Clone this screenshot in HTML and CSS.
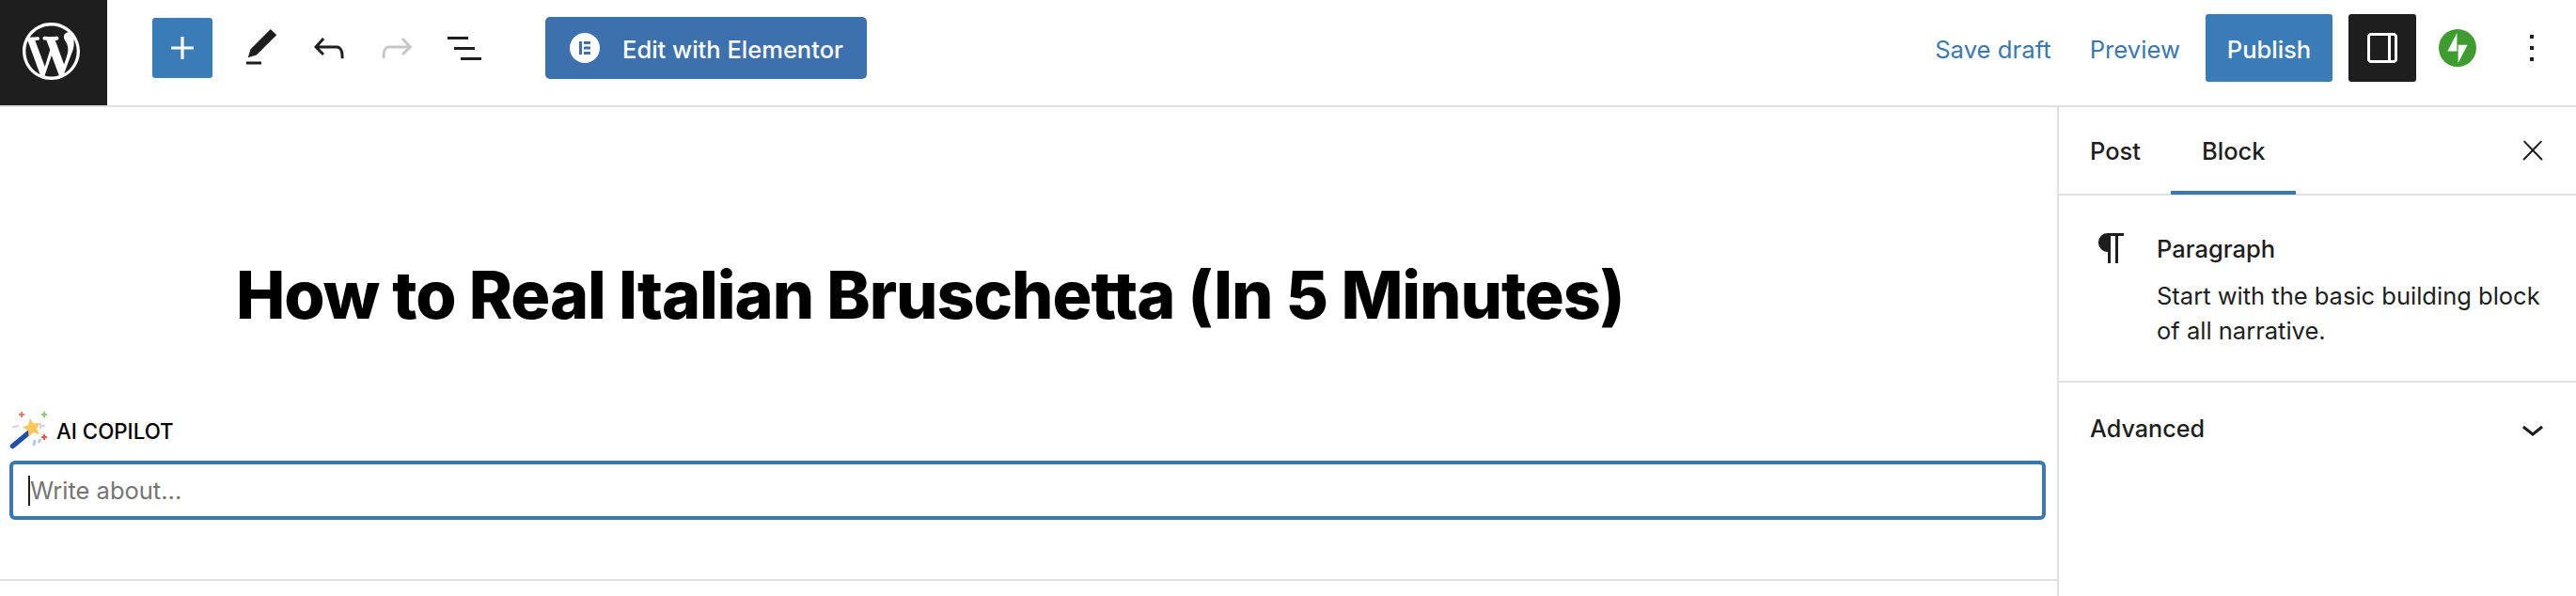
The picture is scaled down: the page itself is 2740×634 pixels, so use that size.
FILE: index.html
```html
<!DOCTYPE html>
<html lang="en">
<head>
    <meta charset="UTF-8">
    <title>How to Real Italian Bruschetta</title>
    <link rel="stylesheet" href="styles.css">
</head>
<body>
    <header class="topbar">
        <div class="logo">
            <svg class="logo-mark" viewBox="0 0 20 20"><path fill-rule="evenodd" d="M20 10c0-5.51-4.49-10-10-10C4.48 0 0 4.49 0 10c0 5.52 4.48 10 10 10 5.51 0 10-4.48 10-10zM7.78 15.37L4.37 6.22c.55-.02 1.17-.08 1.17-.08.5-.06.44-1.13-.06-1.11 0 0-1.45.11-2.37.11-.18 0-.37 0-.58-.01C4.12 2.69 6.87 1.11 10 1.11c2.33 0 4.45.87 6.05 2.34-.68-.11-1.65.39-1.65 1.58 0 .74.45 1.36.9 2.1.35.61.55 1.36.55 2.46 0 1.49-1.4 5-1.4 5l-3.03-8.37c.54-.02.82-.17.82-.17.5-.05.44-1.25-.06-1.22 0 0-1.44.12-2.38.12-.87 0-2.33-.12-2.33-.12-.5-.03-.56 1.2-.06 1.22l.92.08 1.26 3.41zM17.41 10c.24-.64.74-1.87.43-4.25.7 1.29 1.05 2.71 1.05 4.25 0 3.29-1.73 6.24-4.4 7.78.97-2.59 1.94-5.2 2.92-7.78zM6.1 18.09C3.12 16.65 1.11 13.53 1.11 10c0-1.3.23-2.48.72-3.59C3.25 10.3 4.67 14.2 6.1 18.09zm4.03-6.63l2.58 6.98c-.86.29-1.76.45-2.71.45-.79 0-1.57-.11-2.29-.33.81-2.38 1.62-4.74 2.42-7.1z"/></svg>
        </div>
        <div class="tools">
            <button class="add-btn"><svg class="icon" viewBox="0 0 24 24"><path d="M18 11.2h-5.2V6h-1.6v5.2H6v1.6h5.2V18h1.6v-5.2H18z"/></svg></button>
            <svg class="icon" viewBox="0 0 24 24"><path d="M20.1 5.1L16.9 2 6.2 12.7l-1.3 4.4 4.5-1.3L20.1 5.1zM4 20.8h8v-1.5H4v1.5z"/></svg>
            <svg class="icon" viewBox="0 0 24 24"><path d="M18.3 11.7c-.6-.6-1.4-.9-2.3-.9H6.7l2.9-3.3-1.1-1-4.5 5L8.5 16l1-1-2.7-2.7H16c.5 0 .9.2 1.3.5 1 1 1 3.4 1 4.5v.3h1.5v-.2c0-1.5 0-4.3-1.5-5.7z"/></svg>
            <svg class="icon disabled" viewBox="0 0 24 24"><path d="M15.6 6.5l-1.1 1 2.9 3.3H8c-.9 0-1.7.3-2.3.9-1.4 1.5-1.4 4.2-1.4 5.6v.2h1.5v-.3c0-1.1 0-3.5 1-4.5.3-.3.7-.5 1.3-.5h9.2L14.5 15l1.1 1.1 4.6-4.6-4.6-5z"/></svg>
            <svg class="icon" viewBox="0 0 24 24"><path d="M3 6h11v1.5H3V6zm3.5 5.5h11V13h-11v-1.5zM21 17H10v1.5h11V17z"/></svg>
        </div>
        <a href="#" class="elementor-btn">
            <svg class="elementor-icon" viewBox="0 0 32 32"><circle cx="16" cy="16" r="16" fill="#fff"/><path fill="#3c71ae" d="M10 9h3v14h-3zM15 9h7v3h-7zM15 14.500h7v3h-7zM15 20h7v3h-7z"/></svg>
            <span class="btn-text">Edit with Elementor</span>
        </a>
        <div class="actions">
            <a href="#" class="link-btn btn-text">Save draft</a>
            <a href="#" class="link-btn btn-text">Preview</a>
            <button class="publish-btn"><span class="btn-text">Publish</span></button>
            <button class="panel-btn"><svg class="icon" viewBox="0 0 24 24"><path fill-rule="evenodd" d="M18 4H6c-1.100 0-2 .9-2 2v12c0 1.100.9 2 2 2h12c1.100 0 2-.9 2-2V6c0-1.100-.9-2-2-2zM5.500 18V6c0-.3.2-.5.5-.5h9v13H6c-.3 0-.5-.2-.5-.5zm13 0c0 .3-.2.5-.5.5h-1.500v-13H18c.3 0 .5.2.5.5v12z"/></svg></button>
            <svg class="jetpack" viewBox="0 0 32 32"><circle cx="16" cy="16" r="16" fill="#3f9c2e"/><path fill="#fff" d="M15.500 18.700H7.500l8-15.500zM16.500 13.300h8l-8 15.500z"/></svg>
            <svg class="icon more" viewBox="0 0 24 24"><path d="M13 19h-2v-2h2v2zm0-6h-2v-2h2v2zm0-6h-2V5h2v2z"/></svg>
        </div>
    </header>

    <div class="main">
        <main class="editor">
            <h1 class="post-title">How to Real Italian Bruschetta (In 5 Minutes)</h1>
            <div class="copilot">
                <div class="copilot-label">
                    <svg class="wand" viewBox="0 0 40 40">
                        <path d="M3.500 36.500L21 22" stroke="#1f4fa8" stroke-width="5.500" stroke-linecap="round" fill="none"/>
                        <path fill="#fbc75a" d="M22 7l3.500 5.500 7-.5-3.500 6 3 6-6.500-2-5 4.500-.5-6.500-6-3.500 6-2.500z"/>
                        <path stroke="#ef7b66" stroke-width="2" d="M13 0v6M10 3h6" fill="none"/>
                        <path stroke="#8ccf6d" stroke-width="2" d="M37 0v6M34 3h6" fill="none"/>
                        <path stroke="#e8564f" stroke-width="2" d="M37 24v6M34 27h6" fill="none"/>
                        <path stroke="#d4d1f7" stroke-width="2" d="M3 16.500l7-1.500M33 15h5M33 12v6" fill="none"/>
                        <path stroke="#a9c0f0" stroke-width="2.500" d="M26 36l1-6M31 33l2-4" fill="none"/>
                    </svg>
                    <span>AI COPILOT</span>
                </div>
                <div class="copilot-input"><span class="caret"></span>Write about...</div>
            </div>
        </main>

        <aside class="sidebar">
            <div class="tabs">
                <div class="tab">Post</div>
                <div class="tab active">Block</div>
                <svg class="icon close" viewBox="0 0 24 24"><path d="M13 11.800l6.100-6.300-1-1-6.100 6.200-6.100-6.200-1 1 6.100 6.300-6.500 6.700 1 1 6.500-6.600 6.500 6.600 1-1z"/></svg>
            </div>
            <div class="block-card">
                <svg class="icon" viewBox="0 0 24 24"><path d="m9.996 14v-.225l.004.000v6.225h1.500v-14.500h2.500v14.500h1.500v-14.500h3v-1.500h-8.504c-2.761 0-5 2.239-5 5 0 2.761 2.239 5 5 5z"/></svg>
                <div class="block-info">
                    <div class="block-name">Paragraph</div>
                    <p class="block-desc">Start with the basic building block of all narrative.</p>
                </div>
            </div>
            <div class="panel-row">
                <span>Advanced</span>
                <svg class="icon" viewBox="0 0 24 24"><path d="M17.500 11.600L12 16l-5.500-4.400.9-1.200L12 14l4.500-3.600 1 1.200z"/></svg>
            </div>
        </aside>
    </div>
</body>
</html>
```

FILE: styles.css
```css
* {
    box-sizing: border-box;
}
body {
    margin: 0;
    height: 634px;
    overflow: hidden;
    background-color: white;
    color: #1e1e1e;
    font-family: Inter, "Liberation Sans", sans-serif;
    font-size: 25.5px;
}
a {
    text-decoration: none;
}
button {
    border: none;
    padding: 0;
    font: inherit;
    cursor: pointer;
}
.icon {
    display: block;
    width: 48px;
    height: 48px;
    flex-shrink: 0;
    fill: #1e1e1e;
}
.icon.disabled {
    fill: #c8c8c8;
}

/* top bar */
.topbar {
    display: flex;
    align-items: center;
    height: 114px;
    padding-bottom: 10px;
    border-bottom: 2px solid #e0e0e0;
}
.logo {
    display: flex;
    align-items: center;
    justify-content: center;
    align-self: flex-start;
    width: 114px;
    height: 112px;
    margin-bottom: -10px;
    padding: 0 6px 4px 0;
    background-color: #1e1e1e;
}
.logo-mark {
    width: 61px;
    height: 61px;
    fill: white;
}
.tools {
    display: flex;
    align-items: center;
    gap: 24px;
    margin-left: 48px;
}
.add-btn {
    display: flex;
    align-items: center;
    justify-content: center;
    width: 64px;
    height: 64px;
    margin-right: 4px;
    background-color: #3a7cb8;
    border-radius: 3px;
}
.add-btn .icon {
    fill: white;
}
.btn-text {
    position: relative;
    top: 1px;
}
.elementor-btn {
    display: flex;
    align-items: center;
    gap: 24px;
    height: 66px;
    width: 342px;
    margin-left: 62px;
    padding-left: 26px;
    background-color: #3c71ae;
    border-radius: 5px;
    color: white;
    font-weight: 500;
}
.elementor-icon {
    width: 32px;
    height: 32px;
}
.actions {
    display: flex;
    align-items: center;
    margin-left: auto;
    padding-right: 23px;
}
.link-btn {
    color: #3a78b0;
    font-size: 25.7px;
    margin-right: 41px;
}
.link-btn + .link-btn {
    margin-right: 27px;
}
.publish-btn {
    width: 135px;
    height: 72px;
    background-color: #3a7cb8;
    border-radius: 3px;
    color: white;
    font-weight: 500;
}
.panel-btn {
    display: flex;
    align-items: center;
    justify-content: center;
    width: 72px;
    height: 72px;
    margin-left: 17px;
    background-color: #1e1e1e;
    border-radius: 3px;
}
.panel-btn .icon {
    fill: white;
}
.jetpack {
    width: 40px;
    height: 40px;
    margin-left: 24px;
}
.more {
    margin-left: 35px;
}

/* editor */
.main {
    display: flex;
    height: 520px;
}
.editor {
    flex: 1;
    height: 504px;
    border-bottom: 2px solid #e0e0e0;
}
.post-title {
    margin: 0;
    padding: 160px 0 0 251px;
    color: black;
    font-size: 70px;
    font-weight: 800;
    line-height: 80px;
    letter-spacing: -1.08px;
}
.copilot {
    margin: 84px 12px 0 10px;
}
.copilot-label {
    display: flex;
    align-items: center;
    gap: 10px;
    height: 40px;
    color: black;
    font-size: 22.3px;
    font-weight: 500;
}
.wand {
    width: 40px;
    height: 40px;
}
.copilot-input {
    display: flex;
    align-items: center;
    height: 63px;
    margin-top: 12px;
    padding-left: 16px;
    border: 4px solid #3a78b0;
    border-radius: 6px;
    color: #757575;
}
.caret {
    width: 2px;
    height: 32px;
    background-color: #1e1e1e;
}

/* sidebar */
.sidebar {
    width: 552px;
    border-left: 2px solid #e0e0e0;
}
.tabs {
    display: flex;
    align-items: center;
    height: 94px;
    padding-right: 29px;
    border-bottom: 2px solid #e0e0e0;
    font-weight: 500;
}
.tab {
    display: flex;
    align-items: center;
    height: 94px;
    padding: 0 32px 0 33px;
}
.tab.active {
    box-shadow: inset 0 -4px 0 #3a78b0;
}
.close {
    width: 34px;
    height: 34px;
    margin-left: auto;
}
.block-card {
    display: flex;
    gap: 24px;
    height: 199px;
    padding: 32px 33px 0 32px;
    border-bottom: 2px solid #e0e0e0;
}
.block-name {
    font-weight: 500;
    line-height: 36px;
    margin-top: 7px;
}
.block-desc {
    margin: 13px 0 0;
    line-height: 37px;
}
.panel-row {
    display: flex;
    align-items: center;
    justify-content: space-between;
    height: 98px;
    padding: 0 22px 0 33px;
    font-size: 25.2px;
    font-weight: 500;
}
```
